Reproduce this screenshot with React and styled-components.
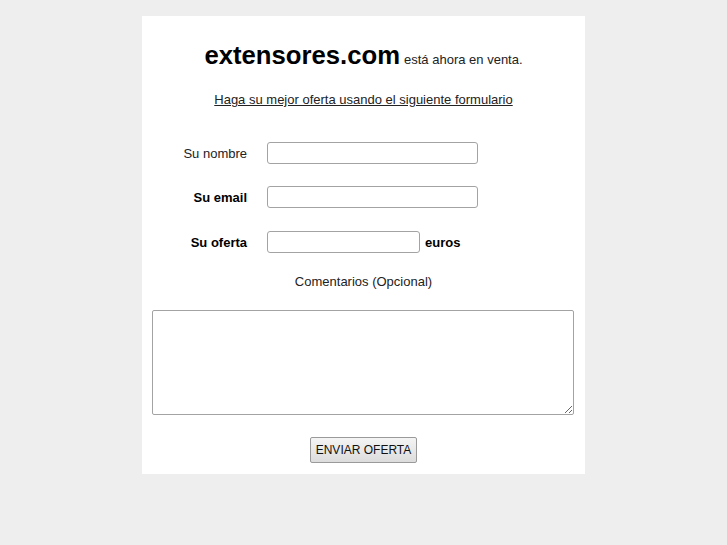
import React from 'react'
import styled, { createGlobalStyle } from 'styled-components'

const GlobalStyle = createGlobalStyle`
  body {
    margin: 0;
    background: #eeeeee;
    font-family: "Liberation Sans", Arial, sans-serif;
    color: #111;
  }
`

const Card = styled.div`
  width: 443px;
  margin: 16px 0 0 142px;
  background: #fff;
  box-sizing: border-box;
  padding: 24px 10px 11px;
  display: flex;
  flex-direction: column;
  align-items: center;
`

const Title = styled.h1`
  margin: 0;
  font-size: 25.7px;
  line-height: 30px;
  font-weight: bold;
  color: #000;
  text-align: center;
`

const Tail = styled.span`
  font-size: 13px;
  font-weight: normal;
  color: #222;
  margin-left: 4px;
`

const Lead = styled.a`
  margin-top: 17px;
  font-size: 13px;
  line-height: 16px;
  color: #222;
  text-decoration: underline;
`

const Form = styled.form`
  width: 100%;
  margin-top: 34px;
  display: flex;
  flex-direction: column;
  align-items: center;
`

const Row = styled.div`
  align-self: stretch;
  display: flex;
  align-items: center;
  height: 22px;
  margin-bottom: ${p => p.$gap}px;
`

const Label = styled.label`
  width: 95px;
  text-align: right;
  font-size: 13px;
  font-weight: ${p => (p.$bold ? 'bold' : 'normal')};
  color: ${p => (p.$bold ? '#000' : '#222')};
  margin-right: 20px;
`

const Field = styled.input`
  width: ${p => p.$w}px;
  height: 22px;
  box-sizing: border-box;
  border: 1px solid #a3a3a3;
  border-radius: 3px;
  padding: 2px 4px;
  font-family: inherit;
  font-size: 13px;
`

const Unit = styled.span`
  margin-left: 5px;
  font-size: 13px;
  font-weight: bold;
  color: #000;
`

const Note = styled.div`
  font-size: 13px;
  color: #222;
  margin-top: 21px;
`

const Comments = styled.textarea`
  align-self: stretch;
  height: 105px;
  margin: 21px 1px 0 0;
  box-sizing: border-box;
  border: 1px solid #a3a3a3;
  border-radius: 2px;
  font-family: inherit;
  font-size: 13px;
  resize: both;
`

const Submit = styled.button`
  margin-top: 22px;
  width: 107px;
  height: 26px;
  border: 1px solid #9a9a9a;
  border-radius: 2px;
  background: linear-gradient(#f4f4f4, #dcdcdc);
  font-family: inherit;
  font-size: 12px;
  color: #111;
  padding: 0;
`

export default function App() {
  return (
    <>
      <GlobalStyle />
      <Card>
        <Title>
          extensores.com<Tail>está ahora en venta.</Tail>
        </Title>
        <Lead href="#">Haga su mejor oferta usando el siguiente formulario</Lead>
        <Form onSubmit={e => e.preventDefault()}>
          <Row $gap={22}>
            <Label>Su nombre</Label>
            <Field $w={211} type="text" />
          </Row>
          <Row $gap={23}>
            <Label $bold>Su email</Label>
            <Field $w={211} type="text" />
          </Row>
          <Row $gap={0}>
            <Label $bold>Su oferta</Label>
            <Field $w={153} type="text" />
            <Unit>euros</Unit>
          </Row>
          <Note>Comentarios (Opcional)</Note>
          <Comments />
          <Submit type="submit">ENVIAR OFERTA</Submit>
        </Form>
      </Card>
    </>
  )
}
